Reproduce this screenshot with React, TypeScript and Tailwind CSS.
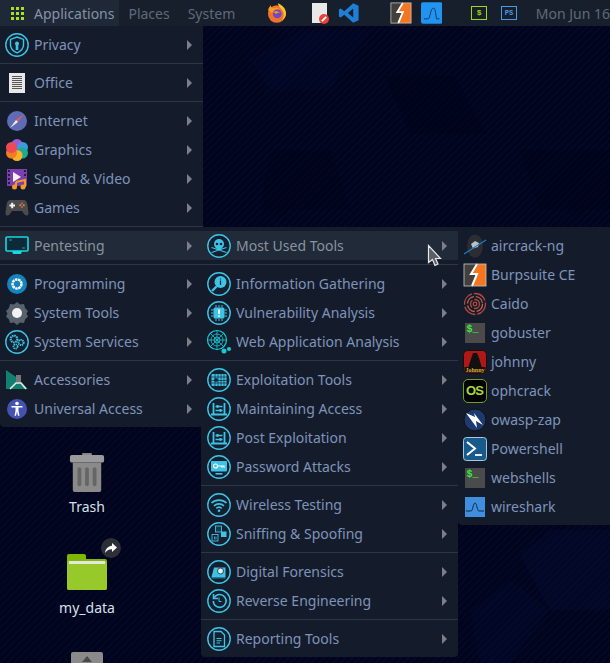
import type { ReactNode } from 'react'

const font = "font-['Noto_Sans',sans-serif]"

function Ring({ children }: { children: ReactNode }) {
  return (
    <svg width="24" height="24" viewBox="0 0 24 24" fill="none">
      <circle cx="12" cy="12" r="11.200" stroke="#3ec3e6" strokeWidth="1.400" fill="#14202f" />
      {children}
    </svg>
  )
}

const C = '#3ec3e6'

const PrivacyIcon = () => (
  <Ring>
    <path d="M12 4l6.500 2.400v5.300c0 3.700-2.800 6.500-6.500 8.100-3.700-1.600-6.500-4.400-6.500-8.100V6.400z" fill="none" stroke={C} strokeWidth="1.400" />
    <circle cx="12" cy="10.500" r="2" fill={C} />
    <rect x="10.700" y="11" width="2.600" height="6" fill={C} />
  </Ring>
)
const OfficeIcon = () => (
  <svg width="24" height="24" viewBox="0 0 24 24">
    <rect x="4" y="2" width="16" height="20" fill="#e8e8e8" />
    <path d="M7 5.500h10M7 7.500h10M7 9.500h10M7 11.500h10M7 13.500h10M7 15.500h10M7 17.500h10" stroke="#555" strokeWidth="1" />
  </svg>
)
const InternetIcon = () => (
  <svg width="24" height="24" viewBox="0 0 24 24">
    <circle cx="12" cy="12" r="10" fill="#5f6cb5" />
    <path d="M19 5l-6 8-2-2z" fill="#e5604f" />
    <path d="M5 19l6-8 2 2z" fill="#f0f0f0" />
  </svg>
)
const GraphicsIcon = () => (
  <svg width="24" height="24" viewBox="0 0 24 24">
    <circle cx="12" cy="6.500" r="5.500" fill="#9c5cd0" />
    <circle cx="17.500" cy="9.500" r="5.500" fill="#3d9be0" />
    <circle cx="17.500" cy="15" r="5.500" fill="#1fa98e" />
    <circle cx="12" cy="17.500" r="5.500" fill="#f4b32c" />
    <circle cx="6.500" cy="15" r="5.500" fill="#f57c22" />
    <circle cx="6.500" cy="9.500" r="5.500" fill="#ee4a55" />
  </svg>
)
const SoundIcon = () => (
  <svg width="24" height="24" viewBox="0 0 24 24">
    <rect x="2" y="2" width="20" height="17" fill="#7b3fb0" />
    <path d="M3 3h2v2h-2zM3 7h2v2h-2zM3 11h2v2h-2zM3 15h2v2h-2zM19 3h2v2h-2zM19 7h2v2h-2z" fill="#2a1a44" />
    <path d="M8 5l8 5-8 5z" fill="#f3f3f3" />
    <path d="M11 15l9-2v7" fill="none" stroke="#f59a23" strokeWidth="2" />
    <path d="M11 15v5" stroke="#f59a23" strokeWidth="2" />
    <circle cx="9.500" cy="20" r="2.500" fill="#f59a23" />
    <circle cx="18" cy="20" r="2.500" fill="#f59a23" />
  </svg>
)
const GamesIcon = () => (
  <svg width="24" height="24" viewBox="0 0 24 24">
    <path d="M5.500 4h13c2.500 0 3.500 2 4 5l1 8c.3 2.700-2.500 3.500-4 1.500L17 15H7l-2.500 3.500c-1.500 2-4.300 1.200-4-1.500l1-8c.5-3 1.500-5 4-5z" fill="#4b4b4d" />
    <path d="M4.500 9.500h5.500M7.200 6.800v5.400" stroke="#f2f2f2" strokeWidth="2" />
    <circle cx="17" cy="7.500" r="1" fill="#e2574c" />
    <circle cx="17" cy="11" r="1" fill="#e2574c" />
    <circle cx="15.200" cy="9.300" r="1" fill="#c8943a" />
    <circle cx="18.800" cy="9.300" r="1" fill="#c8943a" />
  </svg>
)
const PentestingIcon = () => (
  <svg width="24" height="24" viewBox="0 0 24 24">
    <rect x="1" y="3" width="22" height="14" rx="1" fill="#0d2a3a" stroke="#16d8e0" strokeWidth="1.600" />
    <path d="M7 17h10l-1 3H8z" fill="#16d8e0" />
    <path d="M4 6h3M17 14h3" stroke="#16d8e0" strokeWidth="0.700" />
  </svg>
)
const ProgrammingIcon = () => (
  <svg width="24" height="24" viewBox="0 0 24 24">
    <circle cx="12" cy="12" r="10" fill="#1484bd" />
    <circle cx="12" cy="12" r="4.500" fill="none" stroke="#fff" strokeWidth="2.500" strokeDasharray="2.500 0.600" />
    <circle cx="12" cy="12" r="2" fill="#1484bd" />
  </svg>
)
const SystemToolsIcon = () => (
  <svg width="24" height="24" viewBox="0 0 24 24">
    <path d="M12 1l3 2.500 4-.5 1 4 3 3-1.500 2.500 1.500 3-3 3-1 3.500-4-.5-3 2.500-3-2.500-4 .5-1-3.500-3-3 1.500-3-1.500-2.500 3-3 1-4 4 .5z" fill="#56636d" />
    <circle cx="12" cy="12" r="5" fill="#f2f2f2" />
  </svg>
)
const SystemServicesIcon = () => (
  <Ring>
    <circle cx="9" cy="9" r="3.300" fill="none" stroke={C} strokeWidth="2.200" strokeDasharray="1.500 0.700" />
    <circle cx="16" cy="12.500" r="2.600" fill="none" stroke={C} strokeWidth="2" strokeDasharray="1.300 0.600" />
    <circle cx="10.500" cy="16.500" r="2.100" fill="none" stroke={C} strokeWidth="1.800" strokeDasharray="1.200 0.600" />
  </Ring>
)
const AccessoriesIcon = () => (
  <svg width="24" height="24" viewBox="0 0 24 24">
    <path d="M1 2l10 7 4 4 8 8H1z" fill="#12806f" />
    <rect x="11" y="7" width="5" height="7" fill="#777" />
    <path d="M5 21l6-6h5l5 6" fill="none" stroke="#e8e8e8" strokeWidth="1.600" />
  </svg>
)
const UniversalIcon = () => (
  <svg width="24" height="24" viewBox="0 0 24 24">
    <circle cx="12" cy="12" r="10" fill="#4453b2" />
    <circle cx="12" cy="6.500" r="1.800" fill="#fff" />
    <path d="M6.500 9h11v1.600h-4v3.200l1 5h-1.500l-1-4.300-1 4.300h-1.500l1-5v-3.200h-4z" fill="#fff" />
  </svg>
)

const SkullIcon = () => (
  <Ring>
    <circle cx="12" cy="10" r="5" fill={C} />
    <rect x="9.500" y="13" width="5" height="3" fill={C} />
    <circle cx="10" cy="10" r="1.300" fill="#14202f" />
    <circle cx="14" cy="10" r="1.300" fill="#14202f" />
    <path d="M4.500 13.500l15 5M19.500 13.500l-15 5" stroke={C} strokeWidth="1.300" />
  </Ring>
)
const InfoIcon = () => (
  <Ring>
    <circle cx="13.500" cy="10" r="6" fill={C} />
    <path d="M9.500 14.500L5 19" stroke={C} strokeWidth="2.400" />
    <path d="M13.500 8.500v4.500M13.500 6.500v1" stroke="#14202f" strokeWidth="1.200" />
  </Ring>
)
const BugIcon = () => (
  <Ring>
    <rect x="6.500" y="6.500" width="11" height="11" rx="1.500" fill={C} />
    <path d="M9 4v2.500M12 4v2.500M15 4v2.500M9 17.500V20M12 17.500V20M15 17.500V20M4 9h2.500M4 12h2.500M4 15h2.500M17.500 9H20M17.500 12H20M17.500 15H20" stroke={C} strokeWidth="1" />
    <path d="M12 8.500v4.500M12 14.300v1.500" stroke="#fff" strokeWidth="1.800" />
  </Ring>
)
const WebIcon = () => (
  <svg width="26" height="26" viewBox="0 0 26 26" fill="none" stroke="#16c9d5">
    <circle cx="11" cy="11" r="9.500" strokeWidth="1.200" />
    <circle cx="11" cy="11" r="6" strokeWidth="0.800" />
    <circle cx="11" cy="11" r="3" strokeWidth="0.800" />
    <path d="M11 1.500v19M1.500 11h19M4.300 4.300l13.400 13.400M17.700 4.300L4.300 17.700" strokeWidth="0.800" />
    <circle cx="18" cy="22" r="2.500" fill="#16c9d5" stroke="none" />
    <circle cx="23" cy="20" r="2" fill="#16c9d5" stroke="none" />
  </svg>
)
const ExploitIcon = () => (
  <Ring>
    <rect x="4.500" y="6" width="15" height="12" rx="1" fill={C} />
    <path d="M4.500 9h15M8 6v12M11 6v12M14 6v12M17 6v12M4.500 12.500h15M4.500 15h15" stroke="#14202f" strokeWidth="0.700" />
    <circle cx="9" cy="12" r="2" fill="#0a3040" />
  </Ring>
)
const MaintainIcon = () => (
  <Ring>
    <path d="M6.500 6v10.500M17.500 6v10.500M4 17.500h16" stroke={C} strokeWidth="1.800" />
    <path d="M8.500 9.500h7M8.500 13.500h7" stroke={C} strokeWidth="1.600" />
    <circle cx="10.500" cy="9.500" r="1.400" fill={C} />
    <circle cx="13.500" cy="13.500" r="1.400" fill={C} />
  </Ring>
)
const PasswordIcon = () => (
  <Ring>
    <rect x="4" y="6" width="16" height="10.500" rx="1" fill={C} />
    <path d="M8.500 18.800h7" stroke={C} strokeWidth="1.600" />
    <circle cx="8.500" cy="11" r="2" fill="none" stroke="#fff" strokeWidth="1.200" />
    <path d="M10.500 11h7M15 11v1.800M17 11v1.800" stroke="#fff" strokeWidth="1.100" />
  </Ring>
)
const WifiIcon = () => (
  <Ring>
    <path d="M4.500 10a11 11 0 0 1 15 0M7 12.800a7.500 7.500 0 0 1 10 0M9.300 15.300a4 4 0 0 1 5.400 0" stroke={C} strokeWidth="1.700" />
    <circle cx="12" cy="17.800" r="1.300" fill={C} />
  </Ring>
)
const SniffIcon = () => (
  <Ring>
    <rect x="8.500" y="4" width="6" height="6" fill="#143a50" stroke={C} strokeWidth="0.900" />
    <rect x="14" y="9.500" width="5.500" height="5.500" fill={C} />
    <rect x="5" y="12.500" width="6" height="6.500" fill="none" stroke={C} strokeWidth="0.900" />
    <path d="M7.500 14.500v3M9 14.500v3" stroke={C} strokeWidth="0.800" />
  </Ring>
)
const ForensicsIcon = () => (
  <Ring>
    <path d="M7 7.500h11.500v9.500H4.500z" fill={C} />
    <circle cx="13.500" cy="11" r="3" fill="#d8f4fb" stroke="#14202f" strokeWidth="0.800" />
    <path d="M4.500 17h14v1.500h-14z" fill="#1d7c96" />
  </Ring>
)
const ReverseIcon = () => (
  <Ring>
    <path d="M7.300 8.500a6.400 6.400 0 1 1-1 3.500" stroke={C} strokeWidth="1.600" />
    <path d="M6.500 5v4.500h4.500" stroke={C} strokeWidth="1.600" />
    <path d="M12 8.500v4h2.500" stroke={C} strokeWidth="1" />
  </Ring>
)
const ReportIcon = () => (
  <Ring>
    <path d="M7 4.500h7l3.500 3.500v11.500H7z" stroke={C} strokeWidth="1.300" />
    <path d="M9.500 11.500h5M9.500 13.800h5M9.500 16h3.500" stroke={C} strokeWidth="1.100" />
  </Ring>
)

const AircrackIcon = () => (
  <svg width="24" height="24" viewBox="0 0 24 24">
    <ellipse cx="12" cy="12" rx="8" ry="11.500" fill="#2b2d33" />
    <path d="M8 10l4-3 4 2-1 4-5 1.500z" fill="#b8c0c8" />
    <path d="M1 20L23 6" stroke="#1d7fc4" strokeWidth="1.200" />
  </svg>
)
const BurpIcon = ({ size = 24 }: { size?: number }) => (
  <svg width={size} height={size} viewBox="0 0 24 24">
    <rect x="1" y="1" width="22" height="22" fill="#f37721" />
    <path d="M1 1h13L8 11h6l-5 12H1z" fill="#43403c" />
    <path d="M14 1L8 11h6L9 23" fill="none" stroke="#fff" strokeWidth="2" />
    <rect x="1" y="1" width="22" height="22" fill="none" stroke="#c8c8c8" strokeWidth="0.800" />
  </svg>
)
const CaidoIcon = () => (
  <svg width="24" height="24" viewBox="0 0 24 24" fill="none" stroke="#b5473c" strokeWidth="1.300">
    <circle cx="12" cy="12" r="10.500" strokeDasharray="14 2" />
    <circle cx="12" cy="12" r="7.500" strokeDasharray="10 2" stroke="#c4604a" />
    <circle cx="12" cy="12" r="4.500" strokeDasharray="8 2" />
    <circle cx="12" cy="12" r="1.800" />
  </svg>
)
const TermIcon = () => (
  <div className="flex h-[20px] w-[20px] items-start bg-[#4b4b4b] pl-[2px] pt-[2px] font-['Liberation_Mono',monospace] text-[10px] font-bold leading-[10px] text-[#3bea3b]">
    $_
  </div>
)
const JohnnyIcon = () => (
  <svg width="24" height="24" viewBox="0 0 24 24">
    <rect x="0.500" y="0.500" width="23" height="23" rx="4" fill="#b01818" stroke="#111" />
    <path d="M10 3h4l2 5 3 10H5l3-9z" fill="#111" />
    <rect x="1.500" y="17" width="21" height="5.500" fill="#14100a" />
    <text x="12" y="21.500" textAnchor="middle" fontFamily="'Liberation Serif',serif" fontSize="6" fontWeight="700" fill="#d8b040">Johnny</text>
  </svg>
)
const OphcrackIcon = () => (
  <div className="flex h-[24px] w-[24px] items-center justify-center rounded-[5px] border border-[#6f9c2a] bg-black font-['Liberation_Sans',sans-serif] text-[13px] font-bold tracking-[-1px] text-[#a8d83a]">
    OS
  </div>
)
const ZapIcon = () => (
  <svg width="24" height="24" viewBox="0 0 24 24">
    <circle cx="12" cy="12" r="11" fill="#1d3a70" stroke="#111" strokeWidth="1" />
    <path d="M3 5l9 4-1-4 9 12-7-4 1 7z" fill="#fff" />
  </svg>
)
const PowershellIcon = () => (
  <svg width="24" height="24" viewBox="0 0 24 24">
    <rect x="0.500" y="0.500" width="23" height="23" rx="3" fill="#185a8c" stroke="#a9c8de" strokeWidth="1" />
    <path d="M4 5l8 6.500L4 18" fill="none" stroke="#fff" strokeWidth="2" />
    <path d="M12 18h7" stroke="#fff" strokeWidth="1.800" />
  </svg>
)
const WiresharkIcon = () => (
  <svg width="20" height="20" viewBox="0 0 20 20">
    <rect width="20" height="20" fill="#3f8ee0" />
    <path d="M1 14h5c2 0 2-8 4-8s2 8 4 8h5" fill="none" stroke="#0f2a44" strokeWidth="1" />
  </svg>
)

const Arrow = () => <span className="ml-auto mr-[11px] h-0 w-0 border-y-[5px] border-l-[5px] border-y-transparent border-l-[#7a7f88]" />

function Row({ icon, label, active, arrow = true, col = 'w-[34px]' }: { icon: ReactNode; label: string; active?: boolean; arrow?: boolean; col?: string }) {
  return (
    <div className={`flex h-[29px] items-center ${active ? 'bg-[#212a38] text-[#87949f]' : 'text-[#7f93b8]'}`}>
      <div className={`flex shrink-0 justify-center ${col}`}>{icon}</div>
      <span className="whitespace-nowrap">{label}</span>
      {arrow && <Arrow />}
    </div>
  )
}

const Sep = () => (
  <div className="flex h-[9px] items-center">
    <div className="h-px w-full bg-[#2f3642]" />
  </div>
)

const menuClass = 'absolute rounded-b-[4px] bg-[#141c2c] py-[4px] text-[14px] leading-none'
const subCol = 'w-[35px]'
const toolCol = 'w-[33px]'

export default function App() {
  return (
    <div className={`relative h-[663px] w-[610px] overflow-hidden bg-[#01041c] bg-[repeating-linear-gradient(135deg,#00000000_0px,#00000000_3px,#0a184a30_3px,#0a184a30_5px)] ${font}`}>
      {/* wallpaper hexes */}
      <svg className="absolute inset-0" width="610" height="663" viewBox="0 0 610 663">
        <path d="M385 76h70l30 58h-75z" fill="#02031a" fillOpacity="0.4" />
        <path d="M270 150h60l20 60H260z" fill="#02031a" fillOpacity="0.35" />
        <path d="M520 150h90v60h-70z" fill="#02031a" fillOpacity="0.35" />
        <path d="M250 60l50-30h70l-40 60h-60z" fill="#06144a" fillOpacity="0.15" />
        <path d="M520 555l30-25h60v80h-60z" fill="#06144a" fillOpacity="0.2" />
        <path d="M470 610l40-30 40 30-40 53h-30z" fill="#06144a" fillOpacity="0.15" />
      </svg>

      {/* top panel */}
      <div className="relative flex h-[26px] items-center bg-[#171f2c] text-[14px] text-[#5f6a7a]">
        <div className="flex h-full w-[122px] items-center bg-[#1f2836] pl-[11px] text-[#8493a8]">
          <div className="grid grid-cols-3 gap-[2px]">
            {Array.from({ length: 9 }).map((_, i) => (
              <span key={i} className="h-[3px] w-[3px] bg-[#a8e01a]" />
            ))}
          </div>
          <span className="ml-[10px]">Applications</span>
        </div>
        <span className="ml-[9px]">Places</span>
        <span className="ml-[18px]">System</span>
        <svg className="ml-[32px]" width="20" height="20" viewBox="0 0 20 20">
          <circle cx="10" cy="11" r="9" fill="#f3702a" />
          <path d="M11 0c5 2 9 6 8.500 11.500-.4 3-2.500 5-4 6 2-3 2.500-8-.5-11-1.500-2-3-3-4-6.500z" fill="#fbc02d" />
          <path d="M1 7c1-3 2-4 3-5 0 2 1 3 3 3 2-1 4-1 6 1l-5 1-3 3z" fill="#f79b1f" />
          <circle cx="10.500" cy="11" r="4.500" fill="#6a4bc4" />
          <path d="M6.500 9c2-1.500 5-1 7 1-2-.5-3-.2-4 1z" fill="#f79b1f" />
        </svg>
        <div className="relative ml-[25px] h-[20px] w-[16px] bg-[#e8e8e8]">
          <span className="absolute -bottom-[1px] -right-[2px] flex h-[10px] w-[10px] items-center justify-center rounded-full bg-[#e8403a]">
            <span className="h-[2px] w-[6px] -rotate-45 bg-white" />
          </span>
        </div>
        <svg className="ml-[11px]" width="22" height="22" viewBox="0 0 24 24">
          <path d="M17 1l6 3v16l-6 3L7 14l-4 3-2-1V8l2-1 4 3zM17 7l-6 5 6 5z" fill="#1f7fd6" />
        </svg>
        <div className="ml-[30px] flex"><BurpIcon size={22} /></div>
        <svg className="ml-[9px]" width="22" height="22" viewBox="0 0 22 22">
          <rect width="22" height="22" rx="2" fill="#2193f0" />
          <path d="M3 17h4c3 0 2-11 6-11 2 0 2 8 3 11h3" fill="none" stroke="#123b60" strokeWidth="1" />
        </svg>
        <div className="ml-[29px] flex h-[14px] w-[16px] items-center justify-center border border-[#9cd814] font-['Liberation_Mono',monospace] text-[8px] font-bold text-[#9cd814]">$</div>
        <div className="ml-[14px] flex h-[14px] w-[16px] items-center justify-center border border-[#4a9ae8] font-['Liberation_Mono',monospace] text-[7px] font-bold text-[#4a9ae8]">PS</div>
        <span className="ml-[19px] whitespace-nowrap">Mon Jun 16</span>
      </div>

      {/* desktop icons */}
      <div className="absolute left-[47px] top-[452px] flex w-[80px] flex-col items-center text-[14px] text-[#d7e0ea]">
        <svg width="36" height="40" viewBox="0 0 38 42">
          <rect x="14" y="1" width="10" height="4" fill="#8a8a8a" />
          <rect x="1" y="3" width="36" height="8" rx="2" fill="#9a9a9a" />
          <path d="M4 11h30v29a2 2 0 0 1-2 2H6a2 2 0 0 1-2-2z" fill="#8a8a8a" />
          <rect x="9" y="16" width="4" height="20" rx="2" fill="#666" />
          <rect x="17" y="16" width="4" height="20" rx="2" fill="#666" />
          <rect x="25" y="16" width="4" height="20" rx="2" fill="#666" />
        </svg>
        <span className="mt-[4px]">Trash</span>
      </div>
      <div className="absolute left-[47px] top-[538px] flex w-[80px] flex-col items-center text-[14px] text-[#d7e0ea]">
        <div className="relative mt-[16px] h-[36px] w-[40px]">
          <svg width="40" height="36" viewBox="0 0 40 36">
            <path d="M2 0h15a2 2 0 0 1 2 2v3h19a2 2 0 0 1 2 2v27a2 2 0 0 1-2 2H2a2 2 0 0 1-2-2V2a2 2 0 0 1 2-2z" fill="#7fb800" />
            <rect x="0" y="7" width="40" height="29" rx="2" fill="#97c92b" />
            <rect x="2" y="7" width="36" height="3" fill="#e6e6e0" />
          </svg>
          <span className="absolute -right-[14px] -top-[16px] flex h-[20px] w-[20px] items-center justify-center rounded-full bg-[#2c2f36]">
            <svg width="12" height="10" viewBox="0 0 12 10">
              <path d="M7 0l5 4.500L7 9V6.300C4 6.300 2 7.200 0 10c.4-4 3-7 7-7.300z" fill="#fff" />
            </svg>
          </span>
        </div>
        <span className="mt-[7px]">my_data</span>
      </div>
      <div className="absolute left-[71px] top-[652px] flex h-[11px] w-[32px] justify-center rounded-t-[2px] bg-[#8a8a8a] pt-[4px]">
        <span className="h-0 w-0 border-x-[5px] border-b-[6px] border-x-transparent border-b-[#4a4a4a]" />
      </div>

      {/* main menu */}
      <div className={`${menuClass} left-0 top-[26px] w-[203px]`}>
        <Row icon={<PrivacyIcon />} label="Privacy" />
        <Sep />
        <Row icon={<OfficeIcon />} label="Office" />
        <Sep />
        <Row icon={<InternetIcon />} label="Internet" />
        <Row icon={<GraphicsIcon />} label="Graphics" />
        <Row icon={<SoundIcon />} label="Sound & Video" />
        <Row icon={<GamesIcon />} label="Games" />
        <Sep />
        <Row icon={<PentestingIcon />} label="Pentesting" active />
        <Sep />
        <Row icon={<ProgrammingIcon />} label="Programming" />
        <Row icon={<SystemToolsIcon />} label="System Tools" />
        <Row icon={<SystemServicesIcon />} label="System Services" />
        <Sep />
        <Row icon={<AccessoriesIcon />} label="Accessories" />
        <Row icon={<UniversalIcon />} label="Universal Access" />
      </div>

      {/* pentesting submenu */}
      <div className={`${menuClass} left-[201px] top-[227px] w-[257px]`}>
        <Row col={subCol} icon={<SkullIcon />} label="Most Used Tools" active />
        <Sep />
        <Row col={subCol} icon={<InfoIcon />} label="Information Gathering" />
        <Row col={subCol} icon={<BugIcon />} label="Vulnerability Analysis" />
        <Row col={subCol} icon={<WebIcon />} label="Web Application Analysis" />
        <Sep />
        <Row col={subCol} icon={<ExploitIcon />} label="Exploitation Tools" />
        <Row col={subCol} icon={<MaintainIcon />} label="Maintaining Access" />
        <Row col={subCol} icon={<MaintainIcon />} label="Post Exploitation" />
        <Row col={subCol} icon={<PasswordIcon />} label="Password Attacks" />
        <Sep />
        <Row col={subCol} icon={<WifiIcon />} label="Wireless Testing" />
        <Row col={subCol} icon={<SniffIcon />} label="Sniffing & Spoofing" />
        <Sep />
        <Row col={subCol} icon={<ForensicsIcon />} label="Digital Forensics" />
        <Row col={subCol} icon={<ReverseIcon />} label="Reverse Engineering" />
        <Sep />
        <Row col={subCol} icon={<ReportIcon />} label="Reporting Tools" />
      </div>

      {/* most used tools submenu */}
      <div className={`${menuClass} left-[458px] top-[227px] w-[160px]`}>
        <Row col={toolCol} icon={<AircrackIcon />} label="aircrack-ng" arrow={false} />
        <Row col={toolCol} icon={<BurpIcon />} label="Burpsuite CE" arrow={false} />
        <Row col={toolCol} icon={<CaidoIcon />} label="Caido" arrow={false} />
        <Row col={toolCol} icon={<TermIcon />} label="gobuster" arrow={false} />
        <Row col={toolCol} icon={<JohnnyIcon />} label="johnny" arrow={false} />
        <Row col={toolCol} icon={<OphcrackIcon />} label="ophcrack" arrow={false} />
        <Row col={toolCol} icon={<ZapIcon />} label="owasp-zap" arrow={false} />
        <Row col={toolCol} icon={<PowershellIcon />} label="Powershell" arrow={false} />
        <Row col={toolCol} icon={<TermIcon />} label="webshells" arrow={false} />
        <Row col={toolCol} icon={<WiresharkIcon />} label="wireshark" arrow={false} />
      </div>

      {/* mouse pointer */}
      <svg className="absolute left-[427px] top-[244px]" width="16" height="24" viewBox="0 0 16 24">
        <path d="M1.500 1.500v17l4-3 2.500 6 3-1.500-2.500-5.500h5z" fill="#5a5f66" stroke="#e8e8e8" strokeWidth="1.200" />
      </svg>
    </div>
  )
}
